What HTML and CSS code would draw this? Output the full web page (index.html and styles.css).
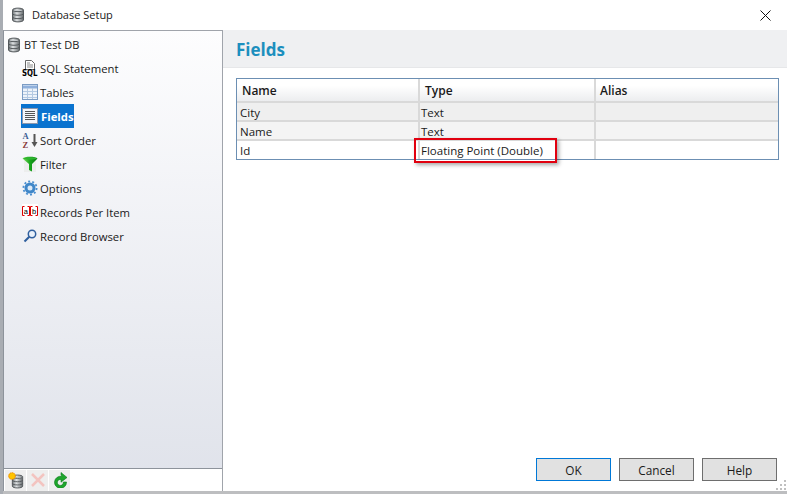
FILE: index.html
```html
<!DOCTYPE html>
<html lang="en">
<head>
<meta charset="utf-8">
<title>Database Setup</title>
<link rel="stylesheet" href="styles.css">
</head>
<body>
<svg class="defs" width="0" height="0" aria-hidden="true">
  <defs>
    <linearGradient id="dbg" x1="0" x2="1" y1="0" y2="0">
      <stop offset="0" stop-color="#6f7578"/><stop offset=".4" stop-color="#dfe2e4"/><stop offset="1" stop-color="#64696c"/>
    </linearGradient>
    <linearGradient id="fun" x1="0" x2="1" y1="0" y2="0">
      <stop offset="0" stop-color="#7fe05f"/><stop offset=".5" stop-color="#17a51c"/><stop offset="1" stop-color="#0c7a14"/>
    </linearGradient>
    <symbol id="db" viewBox="0 0 16 16">
      <path d="M2.500 3C2.500 .5 13.500 .5 13.500 3V13C13.500 15.500 2.500 15.500 2.500 13Z" fill="url(#dbg)" stroke="#54595c"/>
      <path d="M2.500 3C2.500 5.200 13.500 5.200 13.500 3" fill="#c9cdd0" stroke="#54595c"/>
      <path d="M2.500 6.600C2.500 8.800 13.500 8.800 13.500 6.600M2.500 10C2.500 12.200 13.500 12.200 13.500 10" fill="none" stroke="#54595c"/>
    </symbol>
  </defs>
</svg>
<div class="window">
  <header class="titlebar">
    <svg class="title-icon" width="16" height="16"><use href="#db"/></svg>
    <span class="title-text">Database Setup</span>
    <svg class="close" width="11" height="11" viewBox="0 0 11 11"><path d="M.5.5l10 10M10.500.5l-10 10" stroke="#111" fill="none"/></svg>
  </header>
  <div class="main">
    <aside class="sidebar">
      <nav class="tree">
        <div class="root"><svg width="16" height="16"><use href="#db"/></svg><span>BT Test DB</span></div>
        <div class="item">
          <svg width="16" height="16" viewBox="0 0 16 16"><path d="M3.500.500h6l3 3v6h-9z" fill="#fff" stroke="#666"/><path d="M5 3h3M5 5h6M5 7h6" stroke="#888"/><text x="0" y="15.500" class="sql" textLength="15.500" lengthAdjust="spacingAndGlyphs">SQL</text></svg>
          <span>SQL Statement</span>
        </div>
        <div class="item">
          <svg width="16" height="16" viewBox="0 0 16 16"><rect x=".5" y=".5" width="15" height="15" fill="#eef3fa" stroke="#7c9cc4"/><path d="M1 3h14" stroke="#8fb0dc" stroke-width="3"/><path d="M1 7.500h14M1 10.500h14M1 13.500h14M5.500 4v11M10.500 4v11" stroke="#b4c9e2"/></svg>
          <span>Tables</span>
        </div>
        <div class="item selected">
          <svg width="16" height="16" viewBox="0 0 16 16"><rect x=".5" y=".5" width="15" height="15" fill="#f4f6fa" stroke="#8b97ad"/><path d="M3 3.500h10M3 5.500h10M3 7.500h10M3 9.500h10M3 11.500h10" stroke="#555"/></svg>
          <span>Fields</span>
        </div>
        <div class="item">
          <svg width="16" height="16" viewBox="0 0 16 16"><text x="0.500" y="7" class="az az-a">A</text><text x="0.500" y="15.500" class="az az-z">Z</text><path d="M12.500 2v9" stroke="#555" stroke-width="2"/><path d="M9.500 10h6L12.500 15z" fill="#555"/></svg>
          <span>Sort Order</span>
        </div>
        <div class="item">
          <svg width="16" height="16" viewBox="0 0 16 16"><path d="M2 3h12v13H2z" fill="#eceded"/><path d="M.5 2.500C2 .2 14 .2 15.500 2.500L10 8V15.500L7 14V8Z" fill="url(#fun)"/><path d="M1 2.500C4 .9 12 .9 15 2.500C12 4 4 4 1 2.500Z" fill="#2fb52f"/></svg>
          <span>Filter</span>
        </div>
        <div class="item">
          <svg width="16" height="16" viewBox="0 0 16 16"><circle cx="8" cy="8" r="6.600" fill="none" stroke="#4b8fd0" stroke-width="1.800" stroke-dasharray="2 2.150"/><circle cx="8" cy="8" r="4" fill="#dce9f6" stroke="#3f86c8" stroke-width="3"/></svg>
          <span>Options</span>
        </div>
        <div class="item">
          <svg width="16" height="16" viewBox="0 0 16 16"><rect width="16" height="16" fill="#fff"/><path d="M2.500 2.500h-2v9h2M5.500 2.500h2v9h-2M10.500 2.500h-2v9h2M13.500 2.500h2v9h-2" fill="none" stroke="#e00000"/><text x="1.800" y="9.500" class="ab">a</text><text x="10" y="9.500" class="ab">b</text></svg>
          <span>Records Per Item</span>
        </div>
        <div class="item">
          <svg width="16" height="16" viewBox="0 0 16 16"><circle cx="10" cy="6" r="3.700" fill="#e9f1fb" stroke="#2f5f9e" stroke-width="1.500"/><path d="M7.300 8.700L2.500 13.500" stroke="#2f5f9e" stroke-width="2"/></svg>
          <span>Record Browser</span>
        </div>
      </nav>
      <div class="toolbar">
        <div class="tool"><svg width="18" height="18" viewBox="0 0 18 18"><use href="#db" x="3" y="3" width="15" height="15"/><circle cx="5" cy="5" r="3.300" fill="#ffc400" stroke="#f08a00" stroke-dasharray="1.500 .6"/></svg></div>
        <div class="tool"><svg width="16" height="16" viewBox="0 0 16 16"><path d="M2 2l12 12M14 2L2 14" stroke="#f3c4c0" stroke-width="2.500"/></svg></div>
        <div class="tool"><svg width="16" height="16" viewBox="0 0 16 16"><path d="M10 4.500A6 6 0 1 0 14.500 10h-3.200A3 3 0 1 1 9 7.500V10.200L15 5.500 9 .5V3.500" fill="#1fa62c" stroke="#0c7a1c" stroke-width=".6"/></svg></div>
      </div>
    </aside>
    <section class="content">
      <h1 class="heading">Fields</h1>
      <div class="table-wrap">
        <table class="grid">
          <thead>
            <tr><th class="c1">Name</th><th class="c2">Type</th><th class="c3">Alias</th></tr>
          </thead>
          <tbody>
            <tr class="r1"><td>City</td><td>Text</td><td></td></tr>
            <tr class="r2"><td>Name</td><td>Text</td><td></td></tr>
            <tr><td>Id</td><td class="marked">Floating Point (Double)<span class="redbox"></span></td><td></td></tr>
          </tbody>
        </table>
      </div>
      <footer class="buttons">
        <button class="btn default">OK</button>
        <button class="btn">Cancel</button>
        <button class="btn">Help</button>
        <svg class="grip" width="12" height="12" viewBox="0 0 12 12"><path d="M9 1h2v2H9zM5 5h2v2H5zM9 5h2v2H9zM1 9h2v2H1zM5 9h2v2H5zM9 9h2v2H9z" fill="#c0c0c0"/></svg>
      </footer>
    </section>
  </div>
  <div class="bottom-edge"></div>
</div>
</body>
</html>
```
FILE: styles.css
```css
* { box-sizing: border-box; }
html, body { margin: 0; padding: 0; }
body {
  width: 787px;
  height: 494px;
  overflow: hidden;
  background: #fff;
  font-family: "Open Sans", "Noto Sans", sans-serif;
  font-size: 11.500px;
  color: #1a1a1a;
}
.defs { position: absolute; }
.window {
  height: 494px;
  display: flex;
  flex-direction: column;
  border-left: 3px solid #a9adb3;
}
.titlebar {
  height: 30px;
  flex: none;
  display: flex;
  align-items: center;
  padding: 0 16px 0 7px;
  background: #fff;
}
.title-text { margin-left: 6px; flex: 1; font-size: 11px; position: relative; top: -1px; }
.main { flex: 1; display: flex; min-height: 0; }
.sidebar {
  width: 220px;
  flex: none;
  display: flex;
  flex-direction: column;
  border: 1px solid #a0a4ab;
  border-bottom: 0;
  border-left-color: #8d939b;
  background: linear-gradient(#fdfdfe, #dfe2ea);
  font-size: 11.300px;
}
.tree { flex: 1; padding-top: 2px; }
.root, .item { display: flex; align-items: center; height: 24px; }
.root { padding-left: 2px; height: 23px; }
.root span { margin-left: 2px; font-size: 11px; }
.item { padding-left: 18px; width: max-content; }
.item span { padding-left: 2px; padding-right: 1px; }
.item svg { flex: none; overflow: visible; }
.selected {
  background: #0a73cf;
  color: #fff;
  font-weight: 700;
  width: 53px;
  margin-left: 17px;
  padding-left: 1px;
}
.selected span { padding-left: 3px; padding-right: 0; }
.sql { font: 700 8.500px "DejaVu Sans", sans-serif; fill: #000; }
.az { font: 700 8.500px "Liberation Serif", serif; }
.az-a { fill: #3d5e93; }
.az-z { fill: #8a3a3a; }
.ab { font: 400 7.500px "Liberation Sans", sans-serif; fill: #000; }
.toolbar {
  height: 23px;
  flex: none;
  display: flex;
  gap: 1px;
  align-items: center;
  padding-left: 1px;
  background: #fff;
  border-top: 1px solid #8d939b;
}
.tool {
  width: 21px;
  height: 21px;
  background: #eeeeee;
  display: flex;
  align-items: center;
  justify-content: center;
}
.content { flex: 1; display: flex; flex-direction: column; min-width: 0; }
.heading {
  margin: 0;
  height: 38px;
  flex: none;
  line-height: 38px;
  padding: 1px 0 0 13px;
  background: #eff0f2;
  border-bottom: 1px solid #e6e7e9;
  color: #1c8fbe;
  font-size: 17px;
  font-weight: 700;
}
.table-wrap { flex: 1; padding: 10px 8px 0 13px; }
.grid {
  width: 543px;
  border-collapse: separate;
  border-spacing: 0;
  table-layout: fixed;
  border: 1px solid #6c8fb3;
}
.grid th, .grid td {
  padding: 0;
  text-align: left;
  border-right: 2px solid #d9d9d9;
  white-space: nowrap;
}
.grid th:last-child, .grid td:last-child { border-right: 0; }
.grid th {
  height: 24px;
  padding: 1px 0 0 5px;
  font-size: 12px;
  font-weight: 600;
  border-bottom: 2px solid #d9d9d9;
  background: linear-gradient(#fff 30%, #ecedef);
}
.grid th.c3 { padding-left: 4px; }
.grid td {
  height: 19px;
  padding: 1px 0 0 3px;
  border-bottom: 2px solid #d9d9d9;
}
.grid td:nth-child(2) { padding-left: 1px; }
.grid tr:last-child td { border-bottom: 0; height: 18px; }
.c1 { width: 183px; }
.c2 { width: 176px; }
.r1 td { background: #efefef; }
.r2 td { background: #f4f4f4; }
.marked { position: relative; }
.redbox {
  position: absolute;
  left: -6px;
  top: -3px;
  width: 143px;
  height: 25px;
  border: 2px solid #e1000f;
  box-shadow: 2px 2px 4px rgba(0, 0, 0, .35);
}
.buttons {
  position: relative;
  flex: none;
  display: flex;
  justify-content: flex-end;
  gap: 8px;
  padding: 0 10px 10px 0;
}
.btn {
  width: 75px;
  height: 23px;
  padding: 0;
  font: inherit;
  font-size: 11.800px;
  color: #1a1a1a;
  background: #e1e1e1;
  border: 1px solid #6e6e6e;
}
.default { border: 1px solid #0078d7; }
.grip { position: absolute; right: 0; bottom: 0; }
.bottom-edge { height: 3px; flex: none; background: #bdbec0; }
```
